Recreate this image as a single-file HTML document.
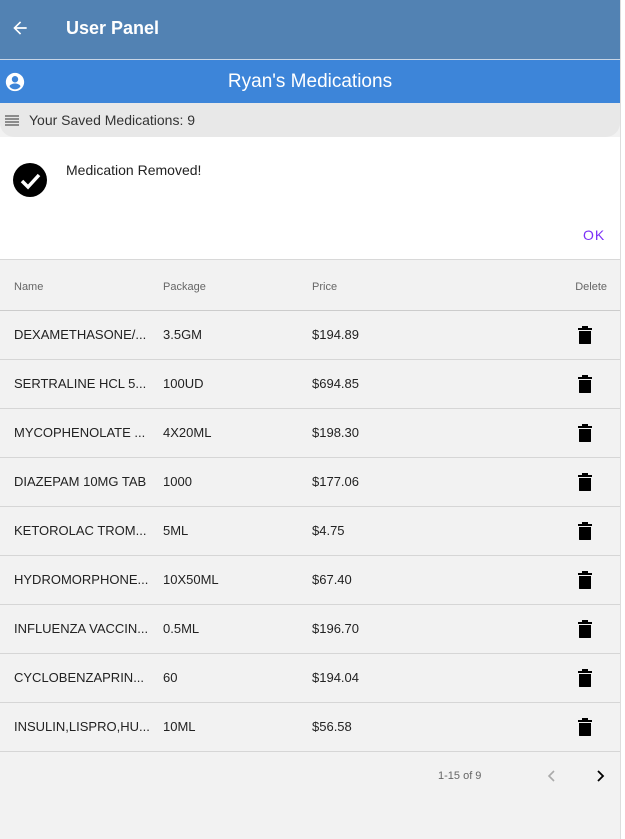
<!DOCTYPE html>
<html><head><style>
*{margin:0;padding:0;box-sizing:border-box}
body{width:625px;height:839px;background:#fff;font-family:"Liberation Sans",sans-serif;position:relative;overflow:hidden}
#wrap{position:absolute;left:0;top:0;width:621px;height:839px;background:#f2f2f2;border-right:1px solid #ddd}
.hdr{height:60px;background:#5282b3;color:#fff;position:relative;border-bottom:1px solid #c9d6e6}
.hdr .t{position:absolute;left:66px;top:18px;font-size:18px;font-weight:bold}
.bar{height:43px;background:#3d85d9;color:#fff;position:relative;text-align:center;font-size:19px;line-height:43px}
.gray{height:34px;background:#e8e8e8;border-radius:0 0 14px 14px;position:relative;font-size:14px;color:#333;line-height:34px;padding-left:29px}
.snack{height:123px;background:#fff;position:relative;border-bottom:1px solid #d8d8d8}
.snack .m{position:absolute;left:66px;top:25px;font-size:14px;color:#222}
.snack .ok{position:absolute;left:583px;top:90px;font-size:14px;color:#7b2ff7;letter-spacing:1px}
table{width:620px;border-collapse:collapse;font-size:13px;color:#222;table-layout:fixed}
th{height:50px;font-weight:normal;font-size:11px;color:#666;text-align:left;border-bottom:1px solid #ccc;padding-top:4px}
td{height:49px;border-bottom:1px solid #d6d6d6;white-space:nowrap;overflow:hidden}
.c1{padding-left:14px;width:163px}
.c2{width:149px}
.c3{width:220px}
.c4{text-align:right;padding-right:13px}
td.c4{padding-right:28px}
.foot{position:relative;height:50px;font-size:11px;color:#666}
</style></head><body><div id="wrap">
<div class="hdr">
<svg style="position:absolute;left:10px;top:18px" width="20" height="20" viewBox="0 0 24 24"><path d="M20 11H7.8l5.6-5.6L12 4l-8 8 8 8 1.4-1.4L7.8 13H20z" fill="#fff"/></svg>
<div class="t">User Panel</div></div>
<div class="bar">
<svg style="position:absolute;left:4px;top:11px" width="22" height="22" viewBox="0 0 24 24"><path fill="#fff" d="M12 2C6.5 2 2 6.5 2 12s4.5 10 10 10 10-4.5 10-10S17.5 2 12 2zm0 3.5a3.5 3.5 0 110 7 3.5 3.5 0 010-7zM12 20c-2.5 0-4.7-1.2-6-3.2.1-2 4-3.1 6-3.1s5.9 1.1 6 3.1c-1.3 2-3.5 3.2-6 3.2z"/></svg>
Ryan's Medications</div>
<div class="gray"><svg style="position:absolute;left:5px;top:12px" width="14" height="11" viewBox="0 0 14 11"><path d="M0 1h14M0 4h14M0 7h14M0 10h14" stroke="#555" stroke-width="1.2"/></svg>Your Saved Medications: 9</div>
<div class="snack">
<svg style="position:absolute;left:12px;top:26px" width="36" height="36" viewBox="0 0 36 36"><ellipse cx="18" cy="17" rx="17" ry="17" fill="#000"/><path d="M10 18l6 6 11-12" stroke="#fff" stroke-width="3.5" fill="none"/></svg>
<div class="m">Medication Removed!</div><div class="ok">OK</div></div>
<table>
<tr><th class="c1">Name</th><th class="c2">Package</th><th class="c3">Price</th><th class="c4">Delete</th></tr>
<tr><td class="c1">DEXAMETHASONE/...</td><td>3.5GM</td><td>$194.89</td><td class="c4">🗑</td></tr>
<tr><td class="c1">SERTRALINE HCL 5...</td><td>100UD</td><td>$694.85</td><td class="c4">🗑</td></tr>
<tr><td class="c1">MYCOPHENOLATE ...</td><td>4X20ML</td><td>$198.30</td><td class="c4">🗑</td></tr>
<tr><td class="c1">DIAZEPAM 10MG TAB</td><td>1000</td><td>$177.06</td><td class="c4">🗑</td></tr>
<tr><td class="c1">KETOROLAC TROM...</td><td>5ML</td><td>$4.75</td><td class="c4">🗑</td></tr>
<tr><td class="c1">HYDROMORPHONE...</td><td>10X50ML</td><td>$67.40</td><td class="c4">🗑</td></tr>
<tr><td class="c1">INFLUENZA VACCIN...</td><td>0.5ML</td><td>$196.70</td><td class="c4">🗑</td></tr>
<tr><td class="c1">CYCLOBENZAPRIN...</td><td>60</td><td>$194.04</td><td class="c4">🗑</td></tr>
<tr><td class="c1">INSULIN,LISPRO,HU...</td><td>10ML</td><td>$56.58</td><td class="c4">🗑</td></tr>
</table>
<div class="foot"><span style="position:absolute;left:438px;top:18px">1-15 of 9</span>
<svg style="position:absolute;left:546px;top:17px" width="12" height="14" viewBox="0 0 12 14"><path d="M8 2L3 7l5 5" stroke="#aaa" stroke-width="1.6" fill="none"/></svg>
<svg style="position:absolute;left:594px;top:17px" width="12" height="14" viewBox="0 0 12 14"><path d="M4 2l5 5-5 5" stroke="#000" stroke-width="1.8" fill="none"/></svg>
</div>
</div>
<style>td.c4{font-size:0}td.c4::after{content:"";display:inline-block;width:14px;height:18px;background:
linear-gradient(#000,#000) 0 2px/14px 2px no-repeat,linear-gradient(#000,#000) 4px 0/6px 2px no-repeat,linear-gradient(#000,#000) 1px 5px/12px 13px no-repeat;border-radius:0 0 2px 2px}</style>
</body></html>
